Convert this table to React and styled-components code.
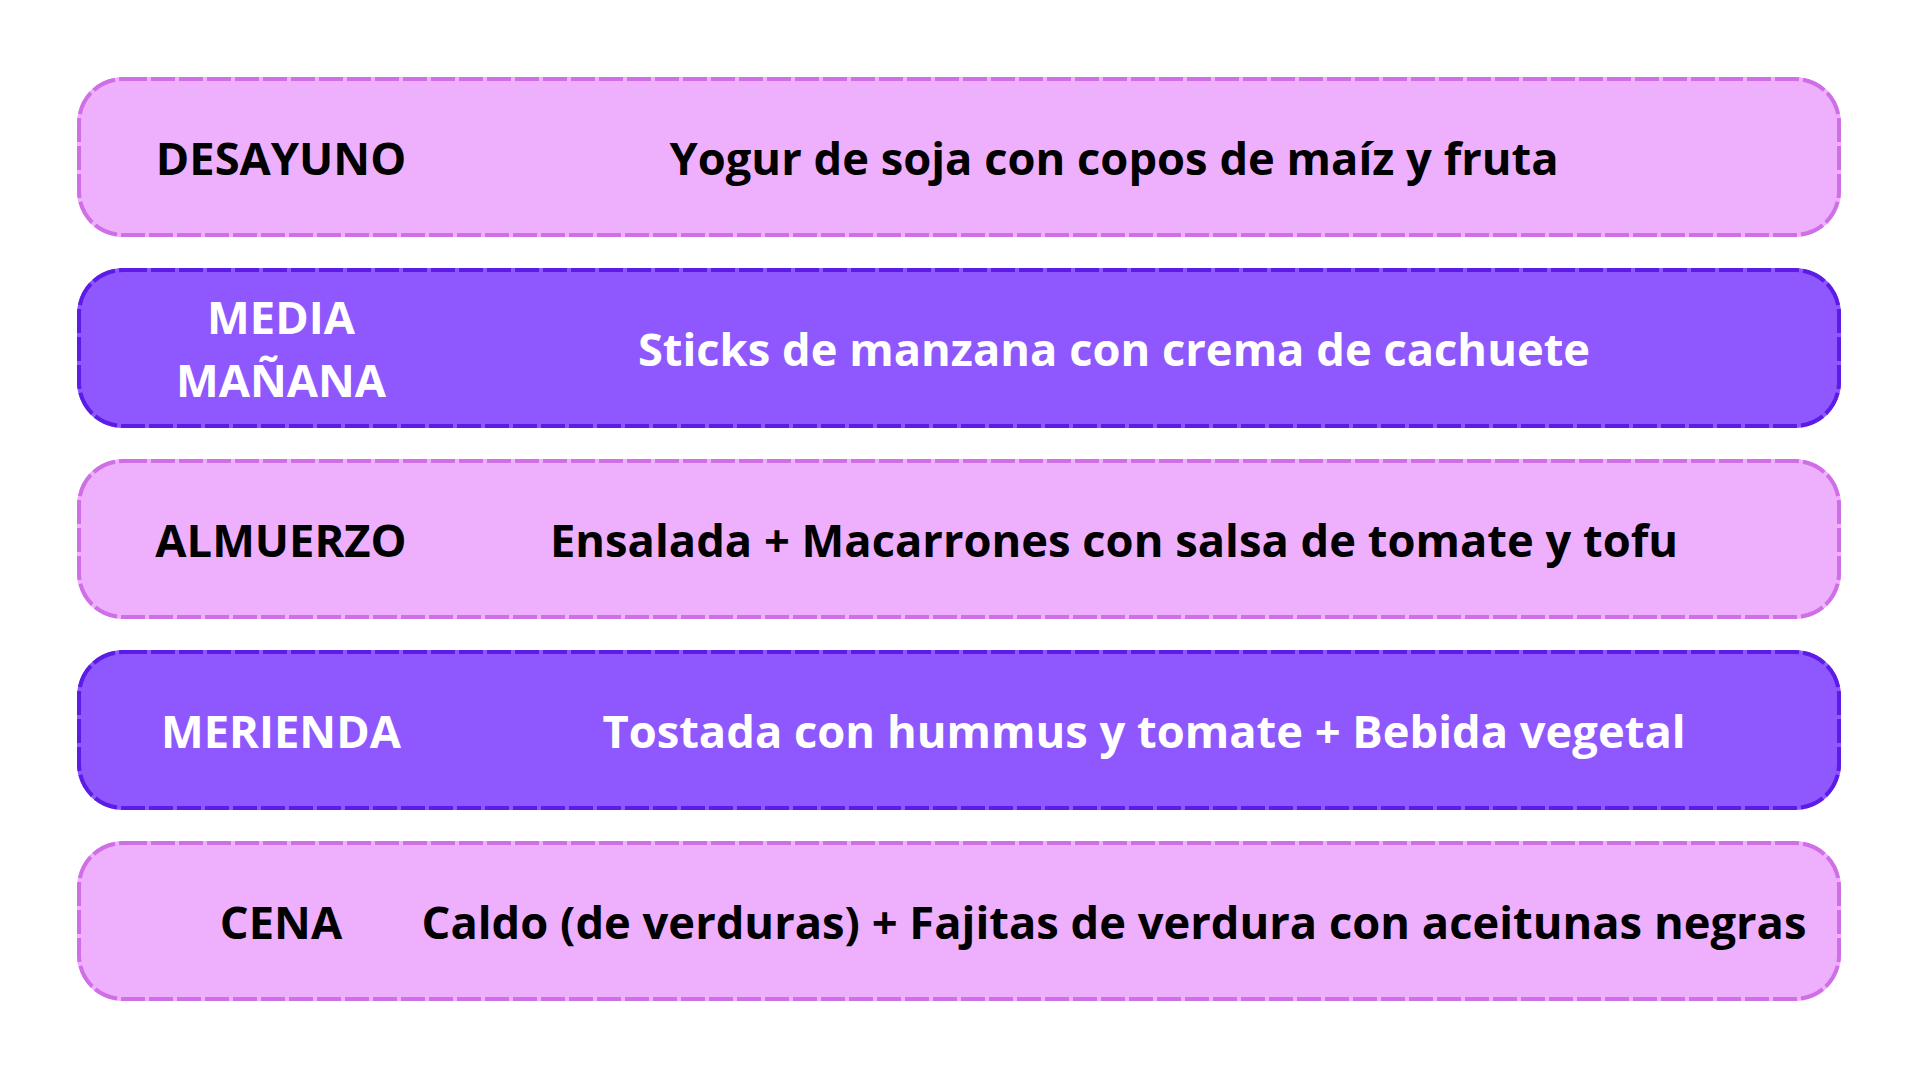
import React from "react";
import styled, { createGlobalStyle } from "styled-components";

const GlobalStyle = createGlobalStyle`
  html, body {
    margin: 0;
    padding: 0;
    background: #ffffff;
  }
  body {
    font-family: "Open Sans", "Noto Sans", "Liberation Sans", sans-serif;
  }
`;

const Page = styled.div`
  width: 1920px;
  height: 1080px;
  box-sizing: border-box;
  padding: 77px 79px 0 77px;
  display: flex;
  flex-direction: column;
  gap: 31px;
`;

const Row = styled.div`
  position: relative;
  height: 160px;
  box-sizing: border-box;
  border-radius: 46px;
  background: ${(p) => (p.dark ? "#8e58fe" : "#eeb0fd")};
  color: ${(p) => (p.dark ? "#ffffff" : "#000000")};
  display: grid;
  grid-template-columns: 310px minmax(0, 1fr);
  align-items: center;
  padding: 0 49px;
  font-weight: 700;
  font-size: 45.3px;
  line-height: 63px;
`;

// dashed outline with long dashes, like the reference
const Outline = styled.svg`
  position: absolute;
  inset: 0;
  width: 100%;
  height: 100%;
  pointer-events: none;
  overflow: visible;

  rect {
    x: 2px;
    y: 2px;
    width: calc(100% - 4px);
    height: calc(100% - 4px);
    fill: none;
    stroke: ${(p) => (p.dark ? "#5c1be6" : "#cf6fe6")};
    stroke-width: 4px;
    stroke-dasharray: 24 4;
  }
`;

const Label = styled.div`
  text-align: center;
`;

const Meal = styled.div`
  display: flex;
  justify-content: center;
  white-space: nowrap;
  padding-left: ${(p) => p.shift || 0}px;
`;

const meals = [
  { label: "DESAYUNO", text: "Yogur de soja con copos de maíz y fruta" },
  { label: ["MEDIA", "MAÑANA"], text: "Sticks de manzana con crema de cachuete", dark: true },
  { label: "ALMUERZO", text: "Ensalada + Macarrones con salsa de tomate y tofu" },
  { label: "MERIENDA", text: "Tostada con hummus y tomate + Bebida vegetal", dark: true, shift: 60 },
  { label: "CENA", text: "Caldo (de verduras) + Fajitas de verdura con aceitunas negras" },
];

export default function App() {
  return (
    <>
      <GlobalStyle />
      <Page>
        {meals.map((m, i) => (
          <Row key={i} dark={m.dark}>
            <Outline dark={m.dark}>
              <rect rx="44" ry="44" />
            </Outline>
            <Label>
              {Array.isArray(m.label)
                ? m.label.map((l) => <div key={l}>{l}</div>)
                : m.label}
            </Label>
            <Meal shift={m.shift}>{m.text}</Meal>
          </Row>
        ))}
      </Page>
    </>
  );
}
